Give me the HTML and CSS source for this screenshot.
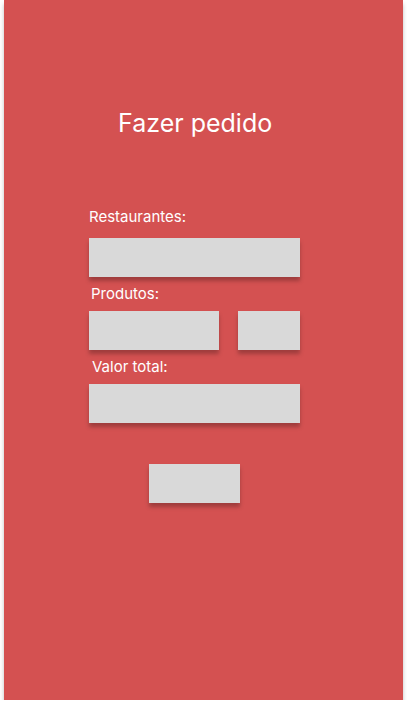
FILE: index.html
```html
<!DOCTYPE html>
<html lang="pt">
<head>
<meta charset="utf-8">
<title>Fazer pedido</title>
<link rel="stylesheet" href="styles.css">
</head>
<body>
<main class="screen">
  <h1 class="title">Fazer pedido</h1>
  <form class="form">
    <label class="label label-rest">Restaurantes:</label>
    <div class="field field-wide"></div>
    <label class="label label-prod">Produtos:</label>
    <div class="row">
      <div class="field field-product"></div>
      <div class="field field-qty"></div>
    </div>
    <label class="label label-total">Valor total:</label>
    <div class="field field-wide"></div>
    <div class="button-wrap">
      <div class="field button"></div>
    </div>
  </form>
</main>
</body>
</html>
```
FILE: styles.css
```css
html, body {
  margin: 0;
  padding: 0;
  background: #ffffff;
}
body {
  font-family: Inter, "Noto Sans", sans-serif;
}
.screen {
  box-sizing: border-box;
  width: 399px;
  height: 700px;
  margin-left: 4px;
  background: #d45151;
  box-shadow: 0 4px 4px rgba(0, 0, 0, 0.25);
  padding-top: 108px;
  display: flex;
  flex-direction: column;
}
.title {
  margin: 0 0 0 114px;
  font-size: 25px;
  line-height: 30px;
  font-weight: 400;
  color: #ffffff;
}
.form {
  display: flex;
  flex-direction: column;
  padding-left: 85px;
}
.label {
  display: block;
  color: #ffffff;
  font-size: 15px;
  line-height: 18px;
  font-weight: 400;
}
.label-rest { margin-top: 70px; margin-bottom: 12px; }
.label-prod { margin-top: 8px; margin-bottom: 8px; margin-left: 2px; }
.label-total { margin-top: 8px; margin-bottom: 8px; margin-left: 3px; }
.field {
  height: 39px;
  background: #d9d9d9;
  box-shadow: 0 4px 4px rgba(0, 0, 0, 0.25);
}
.field-wide { width: 211px; }
.row {
  display: flex;
  gap: 19px;
}
.field-product { width: 130px; }
.field-qty { width: 62px; }
.button-wrap {
  margin-top: 41px;
  padding-left: 60px;
}
.button { width: 91px; }
```
